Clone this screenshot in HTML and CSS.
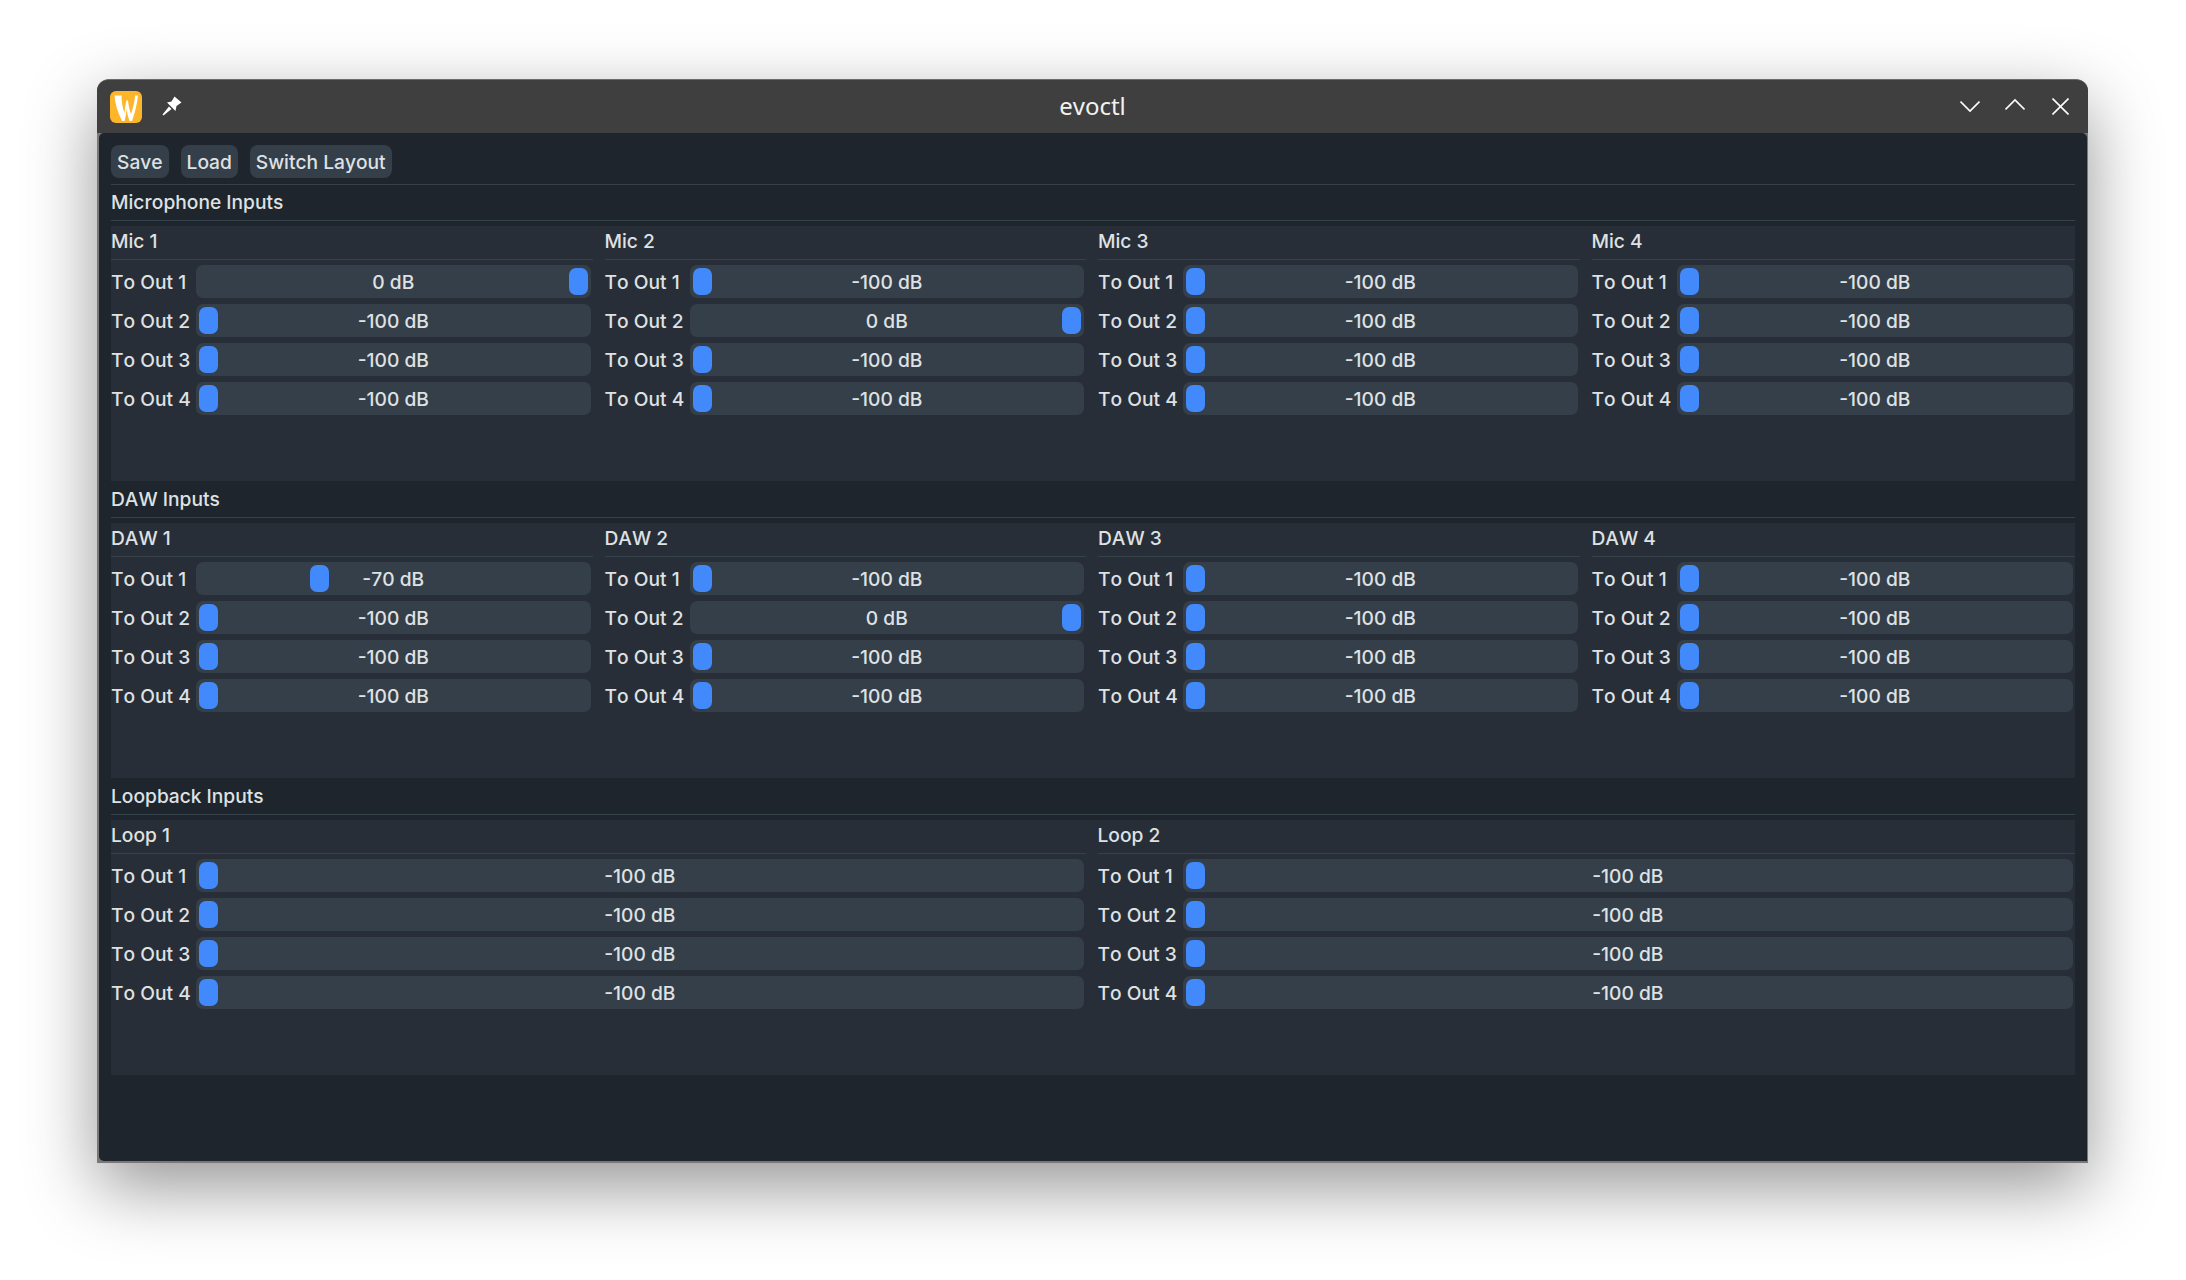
FILE: index.html
```html
<!DOCTYPE html>
<html lang="en">

<head>
  <meta charset="UTF-8">
  <title>evoctl</title>
  <link rel="stylesheet" href="styles.css">
</head>

<body>
  <div class="window">
    <header class="titlebar">
      <svg class="app-icon" width="32" height="32" viewBox="0 0 32 32">
        <rect width="32" height="32" rx="6" fill="#fdb52a"/>
        <path d="M4.5 4.5 L11.5 4.5 C11.5 10 12.5 17 14.5 22 C15 17 15.5 13 16.5 9.5 L18 9.5 C18.5 14 19.5 19 21 23 C23 17 25 10 25 4.5 L28 4.5 C27 13 25 22 22 30 L19.5 30 C18 26 17 22 16.5 18 C16 23 15.5 27 14.5 30 L12 30 C8 22 5 13 4.5 4.5 Z" fill="#fff"/>
      </svg>
      <svg class="pin-icon" width="20" height="20" viewBox="0 0 20 20">
        <path d="M12.5 0.5 L19.5 6.5 L14.5 10 L13.5 15 L5 6.5 L9.5 5.5 Z M7 10.5 L9.5 13 L1.5 19.5 L0.5 18.5 Z" fill="#fff"/>
      </svg>
      <span class="title">evoctl</span>
      <div class="controls">
        <svg width="20" height="14" viewBox="0 0 20 14"><path d="M0.5 1.5 L10 11 L19.5 1.5"/></svg>
        <svg class="up" width="20" height="14" viewBox="0 0 20 14"><path d="M0.5 11.5 L10 2 L19.5 11.5"/></svg>
        <svg class="close" width="17" height="17" viewBox="0 0 17 17"><path d="M0.5 0.5 L16.5 16.5 M16.5 0.5 L0.5 16.5"/></svg>
      </div>
    </header>

    <main class="content">
      <div class="toolbar">
        <button>Save</button>
        <button>Load</button>
        <button>Switch Layout</button>
      </div>

      <section class="section">
        <h2>Microphone Inputs</h2>
        <div class="groups">
          <div class="group">
            <h3>Mic 1</h3>
            <div class="row"><label>To Out 1</label><div class="slider" style="--v:1"><i></i><span>0 dB</span></div></div>
            <div class="row"><label>To Out 2</label><div class="slider"><i></i><span>-100 dB</span></div></div>
            <div class="row"><label>To Out 3</label><div class="slider"><i></i><span>-100 dB</span></div></div>
            <div class="row"><label>To Out 4</label><div class="slider"><i></i><span>-100 dB</span></div></div>
          </div>
          <div class="group">
            <h3>Mic 2</h3>
            <div class="row"><label>To Out 1</label><div class="slider"><i></i><span>-100 dB</span></div></div>
            <div class="row"><label>To Out 2</label><div class="slider" style="--v:1"><i></i><span>0 dB</span></div></div>
            <div class="row"><label>To Out 3</label><div class="slider"><i></i><span>-100 dB</span></div></div>
            <div class="row"><label>To Out 4</label><div class="slider"><i></i><span>-100 dB</span></div></div>
          </div>
          <div class="group">
            <h3>Mic 3</h3>
            <div class="row"><label>To Out 1</label><div class="slider"><i></i><span>-100 dB</span></div></div>
            <div class="row"><label>To Out 2</label><div class="slider"><i></i><span>-100 dB</span></div></div>
            <div class="row"><label>To Out 3</label><div class="slider"><i></i><span>-100 dB</span></div></div>
            <div class="row"><label>To Out 4</label><div class="slider"><i></i><span>-100 dB</span></div></div>
          </div>
          <div class="group">
            <h3>Mic 4</h3>
            <div class="row"><label>To Out 1</label><div class="slider"><i></i><span>-100 dB</span></div></div>
            <div class="row"><label>To Out 2</label><div class="slider"><i></i><span>-100 dB</span></div></div>
            <div class="row"><label>To Out 3</label><div class="slider"><i></i><span>-100 dB</span></div></div>
            <div class="row"><label>To Out 4</label><div class="slider"><i></i><span>-100 dB</span></div></div>
          </div>
        </div>
      </section>

      <section class="section">
        <h2>DAW Inputs</h2>
        <div class="groups">
          <div class="group">
            <h3>DAW 1</h3>
            <div class="row"><label>To Out 1</label><div class="slider" style="--v:0.3"><i></i><span>-70 dB</span></div></div>
            <div class="row"><label>To Out 2</label><div class="slider"><i></i><span>-100 dB</span></div></div>
            <div class="row"><label>To Out 3</label><div class="slider"><i></i><span>-100 dB</span></div></div>
            <div class="row"><label>To Out 4</label><div class="slider"><i></i><span>-100 dB</span></div></div>
          </div>
          <div class="group">
            <h3>DAW 2</h3>
            <div class="row"><label>To Out 1</label><div class="slider"><i></i><span>-100 dB</span></div></div>
            <div class="row"><label>To Out 2</label><div class="slider" style="--v:1"><i></i><span>0 dB</span></div></div>
            <div class="row"><label>To Out 3</label><div class="slider"><i></i><span>-100 dB</span></div></div>
            <div class="row"><label>To Out 4</label><div class="slider"><i></i><span>-100 dB</span></div></div>
          </div>
          <div class="group">
            <h3>DAW 3</h3>
            <div class="row"><label>To Out 1</label><div class="slider"><i></i><span>-100 dB</span></div></div>
            <div class="row"><label>To Out 2</label><div class="slider"><i></i><span>-100 dB</span></div></div>
            <div class="row"><label>To Out 3</label><div class="slider"><i></i><span>-100 dB</span></div></div>
            <div class="row"><label>To Out 4</label><div class="slider"><i></i><span>-100 dB</span></div></div>
          </div>
          <div class="group">
            <h3>DAW 4</h3>
            <div class="row"><label>To Out 1</label><div class="slider"><i></i><span>-100 dB</span></div></div>
            <div class="row"><label>To Out 2</label><div class="slider"><i></i><span>-100 dB</span></div></div>
            <div class="row"><label>To Out 3</label><div class="slider"><i></i><span>-100 dB</span></div></div>
            <div class="row"><label>To Out 4</label><div class="slider"><i></i><span>-100 dB</span></div></div>
          </div>
        </div>
      </section>

      <section class="section">
        <h2>Loopback Inputs</h2>
        <div class="groups two">
          <div class="group">
            <h3>Loop 1</h3>
            <div class="row"><label>To Out 1</label><div class="slider"><i></i><span>-100 dB</span></div></div>
            <div class="row"><label>To Out 2</label><div class="slider"><i></i><span>-100 dB</span></div></div>
            <div class="row"><label>To Out 3</label><div class="slider"><i></i><span>-100 dB</span></div></div>
            <div class="row"><label>To Out 4</label><div class="slider"><i></i><span>-100 dB</span></div></div>
          </div>
          <div class="group">
            <h3>Loop 2</h3>
            <div class="row"><label>To Out 1</label><div class="slider"><i></i><span>-100 dB</span></div></div>
            <div class="row"><label>To Out 2</label><div class="slider"><i></i><span>-100 dB</span></div></div>
            <div class="row"><label>To Out 3</label><div class="slider"><i></i><span>-100 dB</span></div></div>
            <div class="row"><label>To Out 4</label><div class="slider"><i></i><span>-100 dB</span></div></div>
          </div>
        </div>
      </section>
    </main>
  </div>
</body>

</html>
```

FILE: styles.css
```css
html, body {
  margin: 0;
  height: 100%;
  background: #fff;
}
body {
  padding: 79px 98px 0 97px;
  box-sizing: border-box;
  font-family: Inter, "Noto Sans", sans-serif;
  font-size: 19.2px;
  font-weight: 500;
  font-kerning: none;
  color: #dfe1e3;
}

.window {
  height: 1084px;
  display: flex;
  flex-direction: column;
  box-sizing: border-box;
  padding: 0 1px 2px 2px;
  background: #7a7776;
  border-top: 1px solid #6f6a6a;
  border-radius: 12px 12px 0 0;
  box-shadow: 0 24px 70px rgba(0, 0, 0, 0.42);
}

.titlebar {
  flex: none;
  height: 53px;
  margin: 0 -1px 0 -2px;
  padding: 0 19px 0 13px;
  display: flex;
  align-items: center;
  position: relative;
  background: #3f3f3f;
  border-radius: 11px 11px 0 0;
}
.app-icon { margin-right: 20px; }
.pin-icon { margin-top: -1px; }
.title {
  position: absolute;
  left: 0;
  right: 0;
  padding-bottom: 2px;
  text-align: center;
  font-family: "Noto Sans", sans-serif;
  font-size: 24px;
  font-weight: 400;
  color: #f2f2f2;
}
.controls {
  margin-left: auto;
  display: flex;
  align-items: center;
  gap: 25px;
}
.controls svg { display: block; }
.controls path {
  fill: none;
  stroke: #fff;
  stroke-width: 1.6;
}
.controls .up { margin-top: -3px; }
.controls .close { margin-left: 2px; }

.content {
  flex: 1;
  padding: 12px 12px 0 12px;
  background: #1e252c;
  border-radius: 5px 5px 0 5px;
}

.toolbar {
  display: flex;
  gap: 12px;
  padding-bottom: 6px;
  border-bottom: 1px solid #36424a;
}
button {
  height: 33px;
  padding: 0 6px;
  border: 0;
  border-radius: 8px;
  background: #343f49;
  color: inherit;
  font: inherit;
  font-kerning: none;
}

h2, h3 {
  margin: 0;
  font: inherit;
  height: 33px;
  line-height: 31px;
  border-bottom: 1px solid #36424a;
}
h2 { height: 35px; line-height: 35px; margin-bottom: 5px; }

.groups {
  display: grid;
  grid-template-columns: 481.5px 481.5px 481.5px 1fr;
  column-gap: 12px;
  margin-bottom: 1px;
  background: #282e37;
  height: 255px;
}
.groups.two { grid-template-columns: 974.5px 1fr; }

.group h3 { margin-bottom: 5px; }

.row {
  display: flex;
  align-items: center;
  height: 33px;
  margin: 0 2px 6px 0;
}
.row label {
  flex: none;
  width: 85px;
  padding-top: 1px;
}
.slider {
  --v: 0;
  flex: 1;
  height: 33px;
  line-height: 34px;
  position: relative;
  text-align: center;
  background: #343f49;
  border-radius: 7px;
}
.slider i {
  position: absolute;
  top: 3px;
  left: calc(3px + var(--v) * (100% - 25px));
  width: 19px;
  height: 27px;
  border-radius: 7px;
  background: #4289fb;
}
.slider span { position: relative; }
```
